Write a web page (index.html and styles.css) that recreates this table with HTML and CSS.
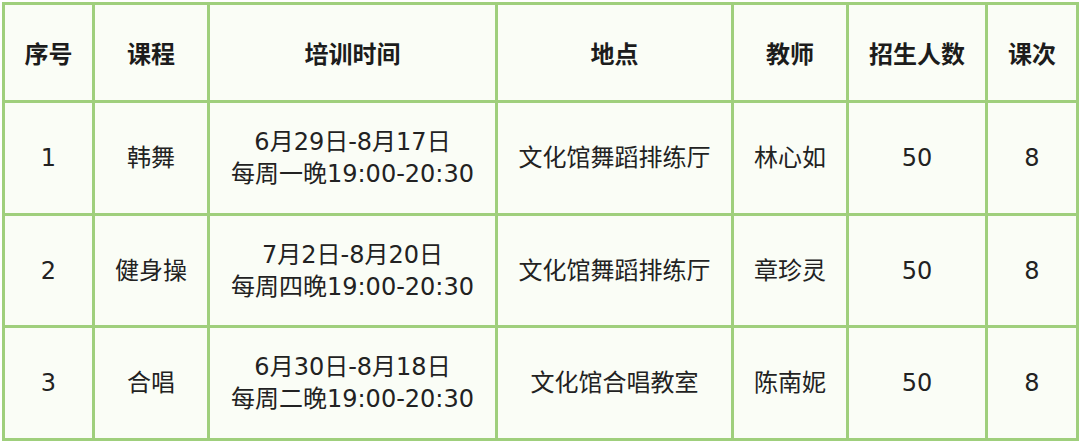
FILE: index.html
```html
<!DOCTYPE html>
<html lang="zh-CN">
<head>
<meta charset="utf-8">
<title>培训课程表</title>
<link rel="stylesheet" href="styles.css">
</head>
<body>
<table class="schedule">
  <colgroup>
    <col class="c-no">
    <col class="c-course">
    <col class="c-time">
    <col class="c-place">
    <col class="c-teacher">
    <col class="c-count">
    <col class="c-times">
  </colgroup>
  <thead>
    <tr class="head">
      <th>序号</th><th>课程</th><th>培训时间</th><th>地点</th><th>教师</th><th>招生人数</th><th>课次</th>
    </tr>
  </thead>
  <tbody>
    <tr class="r1">
      <td>1</td><td>韩舞</td><td>6月29日-8月17日<br>每周一晚19:00-20:30</td><td>文化馆舞蹈排练厅</td><td>林心如</td><td>50</td><td>8</td>
    </tr>
    <tr class="r2">
      <td>2</td><td>健身操</td><td>7月2日-8月20日<br>每周四晚19:00-20:30</td><td>文化馆舞蹈排练厅</td><td>章珍灵</td><td>50</td><td>8</td>
    </tr>
    <tr class="r3">
      <td>3</td><td>合唱</td><td>6月30日-8月18日<br>每周二晚19:00-20:30</td><td>文化馆合唱教室</td><td>陈南妮</td><td>50</td><td>8</td>
    </tr>
  </tbody>
</table>
</body>
</html>
```
FILE: styles.css
```css
html, body {
  margin: 0;
  padding: 0;
  background: #ffffff;
}
body {
  padding: 2px 0 0 2px;
  font-family: "DejaVu Sans", "Noto Sans CJK SC", sans-serif;
  color: #222;
}
.schedule {
  border-collapse: collapse;
  table-layout: fixed;
  width: 1074px;
  background: #fafdf6;
}
.schedule th, .schedule td {
  border: 3px solid #9fcf7c;
  text-align: center;
  vertical-align: middle;
  padding: 0;
  font-size: 24px;
  line-height: 32px;
}
.schedule th {
  font-family: "Noto Sans CJK SC", sans-serif;
  font-weight: 700;
  color: #1c1c1c;
}
.c-no { width: 90px; }
.c-course { width: 115px; }
.c-time { width: 288px; }
.c-place { width: 236px; }
.c-teacher { width: 115px; }
.c-count { width: 139px; }
.c-times { width: 91px; }
.head { height: 98px; }
.r1 { height: 113px; }
.r2 { height: 112px; }
.r3 { height: 113px; }
```
